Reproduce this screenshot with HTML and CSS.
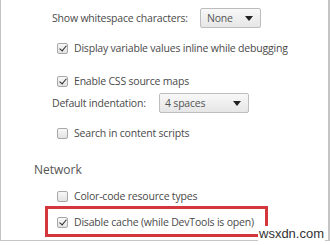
FILE: index.html
```html
<!DOCTYPE html>
<html>
<head>
<meta charset="utf-8">
<link rel="stylesheet" href="styles.css">
</head>
<body>
<div class="frame">
  <div class="row r1">
    <span class="label l1">Show whitespace characters:</span>
    <div class="select s1"><span>None</span><span class="arrow"></span></div>
  </div>
  <div class="row cb r2"><span class="box checked"></span><span class="text">Display variable values inline while debugging</span></div>
  <div class="row cb r3"><span class="box checked"></span><span class="text">Enable CSS source maps</span></div>
  <div class="row r4">
    <span class="label l2">Default indentation:</span>
    <div class="select s2"><span>4 spaces</span><span class="arrow"></span></div>
  </div>
  <div class="row cb r5"><span class="box"></span><span class="text">Search in content scripts</span></div>
  <div class="heading">Network</div>
  <div class="row cb r7"><span class="box"></span><span class="text">Color-code resource types</span></div>
  <div class="highlight">
    <div class="row cb r8"><span class="box checked"></span><span class="text">Disable cache (while DevTools is open)</span></div>
  </div>
  <div class="watermark">wsxdn.com</div>
</div>
</body>
</html>
```
FILE: styles.css
```css
* { box-sizing: border-box; }
html, body { margin: 0; padding: 0; background: #fff; }
body { width: 330px; height: 245px; overflow: hidden; font-family: "Open Sans", "Noto Sans", sans-serif; color: #4a4a4a; }
.frame {
  position: relative;
  width: 330px;
  height: 241px;
  border-left: 1px solid #c4c4c4;
  border-right: 2px solid #c4c4c4;
  border-bottom: 1px solid #c4c4c4;
  display: flex;
  flex-direction: column;
}
.row { display: flex; align-items: center; height: 20px; font-size: 10.5px; letter-spacing: -0.2px; white-space: nowrap; }
.label { padding-left: 51px; flex: none; }
.l1 { width: 199px; }
.l2 { width: 158px; }
.r1 { margin-top: 8px; }
.r2 { margin-top: 10px; }
.r3 { margin-top: 13px; }
.r4 { margin-top: 2px; }
.r5 { margin-top: 10px; }
.r7 { margin-top: 6px; }
.cb { padding-left: 56px; }
.box {
  width: 11px; height: 11px;
  border: 1px solid #a8a8a8;
  border-radius: 2px;
  background: linear-gradient(#f8f8f8, #e2e2e2);
  margin-right: 6px;
  position: relative;
  flex: none;
}
.box.checked::after {
  content: "";
  position: absolute;
  left: 3px; top: 0px;
  width: 3px; height: 6px;
  border-right: 1.7px solid #2a2a2a;
  border-bottom: 1.7px solid #2a2a2a;
  transform: rotate(40deg);
}
.select {
  height: 20px;
  border: 1px solid #bdbdbd;
  border-radius: 2px;
  background: linear-gradient(#f8f8f8, #e6e6e6);
  display: flex;
  align-items: center;
  justify-content: space-between;
  padding: 0 7px 0 6px;
  color: #555;
  flex: none;
}
.s1 { width: 61px; }
.s2 { width: 90px; padding-left: 5px; }
.arrow {
  width: 0; height: 0;
  border-left: 4px solid transparent;
  border-right: 4px solid transparent;
  border-top: 5px solid #222;
}
.heading {
  margin-top: 17px;
  height: 20px;
  line-height: 20px;
  padding-left: 33px;
  font-size: 12px;
  color: #555;
}
.highlight {
  margin-left: 44px;
  width: 223px;
  height: 31px;
  border: 3px solid #d4363e;
  padding-top: 3px;
}
.highlight .cb { padding-left: 9px; }
.watermark {
  position: absolute;
  left: 257px;
  top: 226px;
  font-family: "Liberation Sans", Arial, sans-serif;
  font-size: 13px;
  color: #333;
  background: #fff;
  padding: 0 1px;
  line-height: 15px;
}
```
